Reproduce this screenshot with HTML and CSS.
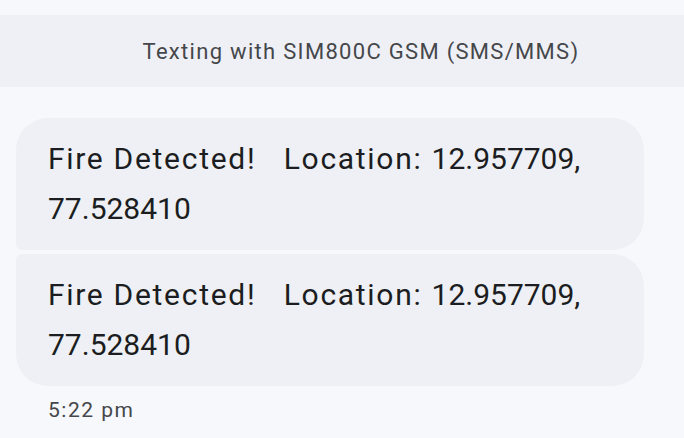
FILE: index.html
```html
<!DOCTYPE html>
<html>
<head>
<meta charset="utf-8">
<link rel="stylesheet" href="styles.css">
</head>
<body>
<div class="screen">
  <div class="banner">Texting with SIM800C GSM (SMS/MMS)</div>
  <div class="thread">
    <div class="bubble first"><span class="word">Fire Detected!&nbsp;&nbsp; Location: </span>12.957709, 77.528410</div>
    <div class="bubble last"><span class="word">Fire Detected!&nbsp;&nbsp; Location: </span>12.957709, 77.528410</div>
    <div class="time">5:22 pm</div>
  </div>
</div>
</body>
</html>
```
FILE: styles.css
```css
* { box-sizing: border-box; }
html, body {
  margin: 0;
  padding: 0;
  background: #f7f8fc;
}
.screen {
  width: 684px;
  height: 438px;
  overflow: hidden;
  padding-top: 15px;
  font-family: Roboto, "Noto Sans", sans-serif;
}
.banner {
  height: 72px;
  background: #eff0f5;
  display: flex;
  align-items: center;
  justify-content: center;
  font-size: 22px;
  letter-spacing: 1.3px;
  color: #45474b;
  padding-left: 38px;
}
.thread {
  display: flex;
  flex-direction: column;
  gap: 4px;
  padding: 31px 40px 0 16px;
}
.bubble {
  background: #eef0f5;
  color: #1c1d21;
  font-size: 30px;
  line-height: 50px;
  padding: 16px 40px 16px 32px;
  border-radius: 32px;
}
.word { letter-spacing: 1.7px; }
.bubble.first { border-bottom-left-radius: 6px; }
.bubble.last { border-top-left-radius: 6px; }
.time {
  margin-top: 8px;
  padding-left: 32px;
  font-size: 21px;
  letter-spacing: 1.5px;
  color: #45474b;
}
```
